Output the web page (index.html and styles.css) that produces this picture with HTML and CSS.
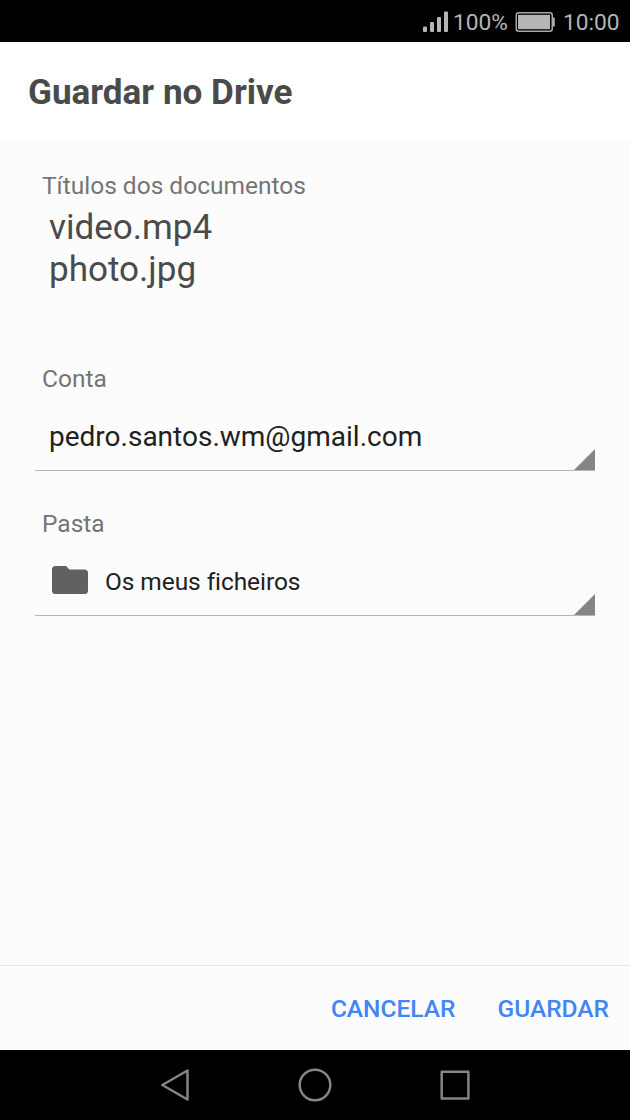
FILE: index.html
```html
<!DOCTYPE html>
<html lang="pt">
<head>
<meta charset="utf-8">
<title>Guardar no Drive</title>
<link rel="stylesheet" href="styles.css">
</head>
<body>
<div class="screen">
  <div class="status">
    <svg class="signal" width="26" height="22" viewBox="0 0 26 22" fill="#b5b5b5"><rect x="0" y="15.500" width="4" height="5.500" rx="1"/><rect x="7" y="11" width="4" height="10" rx="1"/><rect x="14" y="6" width="4" height="15" rx="1"/><rect x="21" y="0.500" width="4" height="20.500" rx="1"/></svg>
    <span class="percent">100%</span>
    <svg class="battery" width="40" height="20" viewBox="0 0 40 20"><rect x="1.250" y="0.750" width="36" height="18.500" rx="2.500" fill="none" stroke="#a8a8a8" stroke-width="1.500"/><rect x="3" y="2.800" width="32" height="14.400" fill="#b5b5b5"/><rect x="38" y="5.500" width="1.700" height="9" fill="#b5b5b5"/></svg>
    <span class="clock">10:00</span>
  </div>
  <header class="header"><h1 class="title">Guardar no Drive</h1></header>
  <main class="content">
    <div class="label">Títulos dos documentos</div>
    <div class="files"><div>video.mp4</div><div>photo.jpg</div></div>
    <div class="label account-label">Conta</div>
    <div class="spinner"><span class="account">pedro.santos.wm@gmail.com</span><svg class="corner" width="21" height="21"><path d="M21 0V21H0Z"/></svg></div>
    <div class="label folder-label">Pasta</div>
    <div class="spinner"><svg class="folder-icon" width="36" height="29" viewBox="0 0 36 29"><path d="M3.500 0H14L17.500 3.500H32.500Q36 3.500 36 7V24.500Q36 28 32.500 28H3.500Q0 28 0 24.500V3.500Q0 0 3.500 0Z"/></svg><span class="folder">Os meus ficheiros</span><svg class="corner" width="21" height="21"><path d="M21 0V21H0Z"/></svg></div>
  </main>
  <footer class="actions"><span class="cancel">CANCELAR</span><span class="save">GUARDAR</span></footer>
  <nav class="navbar"><svg width="630" height="70" fill="none" stroke="#858585" stroke-width="2.500" stroke-linejoin="round"><path d="M187.500 20.500V49.500L162.300 35Z"/><circle cx="315" cy="35" r="15.300"/><rect x="441.700" y="21.700" width="26.700" height="26.700"/></svg></nav>
</div>
</body>
</html>
```
FILE: styles.css
```css
* { box-sizing: border-box; }
body { margin: 0; font-family: Roboto, sans-serif; }
.screen { width: 630px; height: 1120px; display: flex; flex-direction: column; background: #fcfcfc; overflow: hidden; }
.status { height: 42px; background: #000; color: #b5b5b5; display: flex; align-items: center; padding-left: 423px; font-size: 22.750px; line-height: 28px; padding-top: 2px; white-space: nowrap; }
.signal { flex: none; margin-right: 4px; margin-top: -1px; }
.percent { width: 62px; padding-top: 1px; }
.clock { padding-top: 1px; }
.battery { flex: none; margin-right: 8px; margin-top: -1px; }
.header { height: 98px; background: #fff; padding: 29px 28px 0; }
.title { margin: 0; font-size: 35.100px; line-height: 42px; font-weight: 700; color: #4a4a4a; white-space: nowrap; }
.content { flex: 1; padding: 31px 35px 0; }
.label { padding-left: 7px; font-size: 24.500px; line-height: 30px; color: #757575; }
.files { padding-left: 14px; margin-top: 5px; font-size: 35.050px; line-height: 42px; color: #4a4a4a; }
.account-label { margin-top: 74px; }
.spinner { position: relative; height: 70px; margin-top: 7px; border-bottom: 1px solid #b5b5b5; display: flex; align-items: center; color: #212121; white-space: nowrap; }
.account { padding-left: 14px; padding-top: 1px; font-size: 28px; }
.folder-label { margin-top: 38px; }
.folder-icon { margin-left: 17px; margin-right: 17px; fill: #616161; }
.folder { padding-top: 1px; font-size: 24.500px; letter-spacing: -0.08px; }
.corner { position: absolute; right: 0; bottom: 0; fill: #858585; }
.actions { height: 85px; border-top: 1px solid #e4e4e4; display: flex; align-items: center; justify-content: flex-end; padding-right: 21px; gap: 42px; color: #4285f4; font-size: 24.500px; font-weight: 500; }
.navbar { height: 70px; background: #000; }
```
